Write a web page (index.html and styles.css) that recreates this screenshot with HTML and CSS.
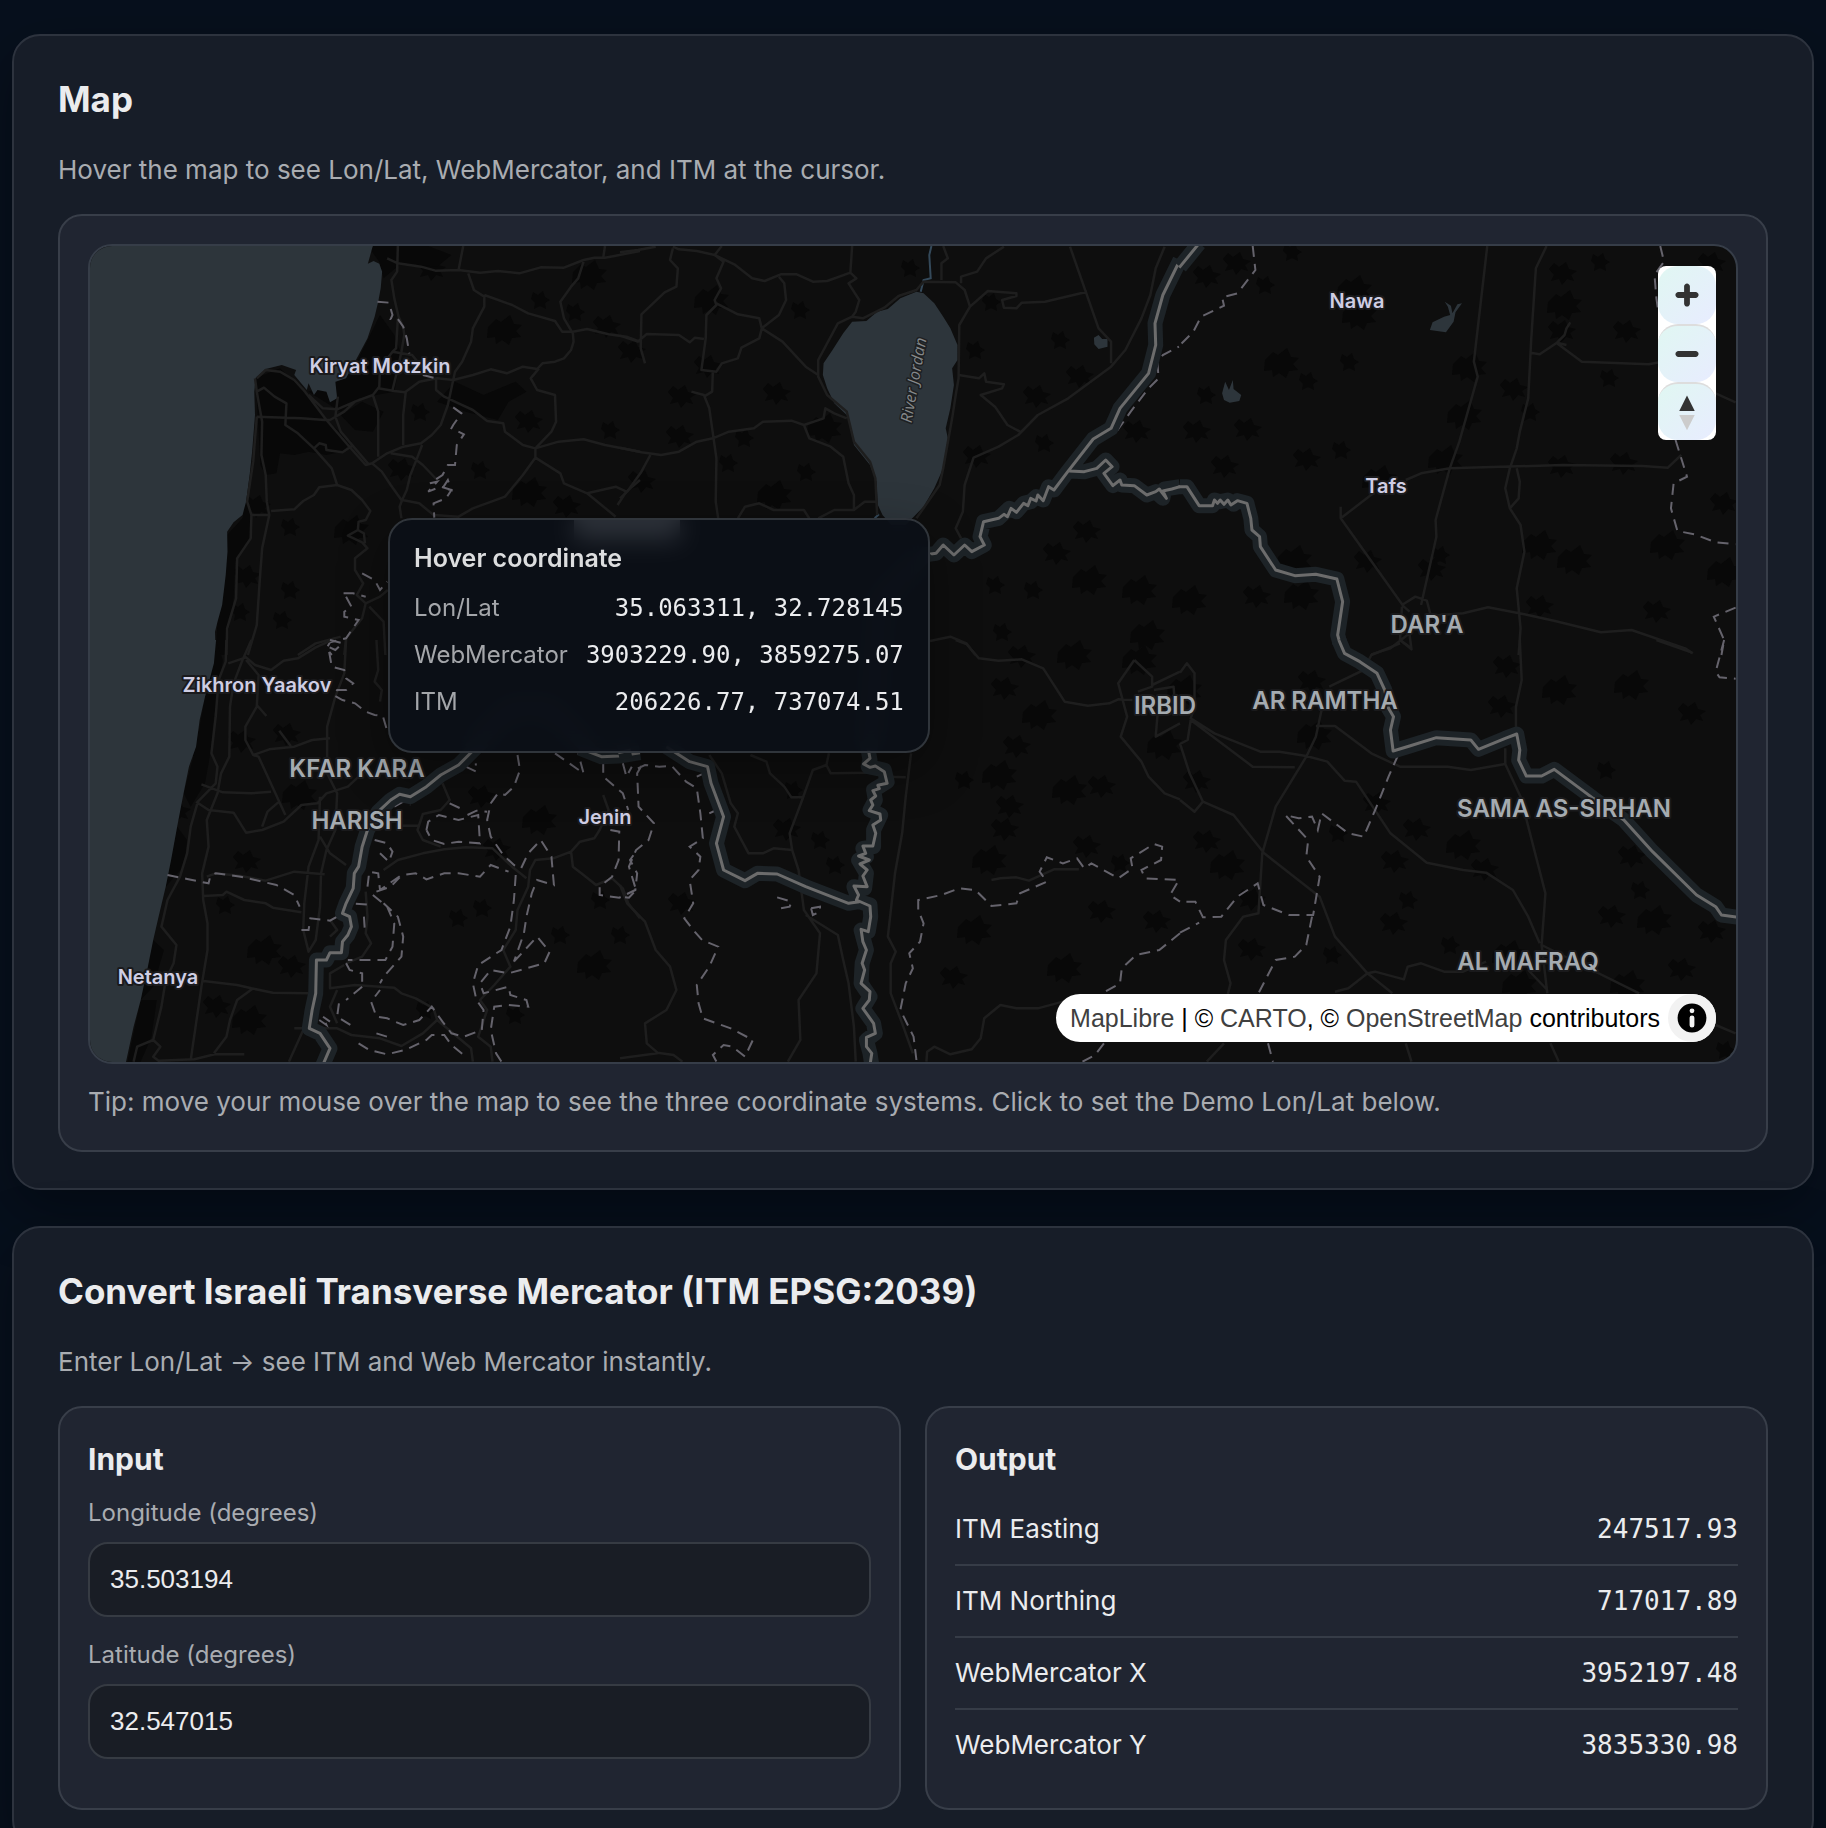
FILE: index.html
```html
<!DOCTYPE html>
<html lang="en">
<head>
<meta charset="utf-8">
<meta name="viewport" content="width=device-width, initial-scale=1">
<title>ITM coordinate converter</title>
<link rel="stylesheet" href="styles.css">
</head>
<body>
<main class="page">
  <section class="card">
    <h2 class="card-title">Map</h2>
    <p class="card-text">Hover the map to see Lon/Lat, WebMercator, and ITM at the cursor.</p>
    <div class="panel">
      <div class="map">
        <svg class="map-canvas" viewBox="90 246 1646 816" preserveAspectRatio="xMidYMid slice" role="img" aria-label="Map of northern Israel and Jordan">
          <defs>
            <path id="scrub-a" d="M-12 -3l5 -6 5 4 7 -5 3 7 8 2 -6 4 3 6 -7 -2 -5 6 -3 -6 -8 2 3 -6z"/>
            <path id="scrub-b" d="M-7 -8l5 3 5 -4 2 6 5 3 -5 3 1 6 -6 -3 -6 3 1 -6 -4 -4z"/>
            <path id="scrub-c" d="M-17 -3l8 -8 5 3 9 -7 4 9 8 1 -6 6 5 6 -9 1 -3 7 -7 -5 -6 4 -1 -7 -8 1z"/>
          </defs>
          <g class="scrub">
            <use href="#scrub-c" x="505" y="330"/><use href="#scrub-a" x="430" y="268"/><use href="#scrub-b" x="540" y="300"/><use href="#scrub-c" x="590" y="275"/>
            <use href="#scrub-b" x="575" y="312"/><use href="#scrub-a" x="605" y="325"/><use href="#scrub-c" x="352" y="530"/><use href="#scrub-a" x="400" y="468"/>
            <use href="#scrub-b" x="420" y="412"/><use href="#scrub-a" x="527" y="420"/><use href="#scrub-b" x="610" y="430"/><use href="#scrub-c" x="530" y="492"/>
            <use href="#scrub-a" x="565" y="505"/><use href="#scrub-b" x="480" y="470"/><use href="#scrub-b" x="290" y="527"/><use href="#scrub-b" x="290" y="590"/>
            <use href="#scrub-b" x="282" y="620"/><use href="#scrub-a" x="255" y="505"/><use href="#scrub-a" x="245" y="575"/><use href="#scrub-b" x="240" y="612"/>
            <use href="#scrub-c" x="195" y="745"/><use href="#scrub-a" x="175" y="810"/><use href="#scrub-a" x="240" y="740"/><use href="#scrub-a" x="285" y="733"/>
            <use href="#scrub-c" x="300" y="795"/><use href="#scrub-a" x="245" y="860"/><use href="#scrub-c" x="265" y="950"/><use href="#scrub-a" x="290" y="965"/>
            <use href="#scrub-a" x="215" y="1005"/><use href="#scrub-c" x="250" y="1020"/><use href="#scrub-b" x="225" y="905"/><use href="#scrub-b" x="425" y="1010"/>
            <use href="#scrub-a" x="480" y="795"/><use href="#scrub-c" x="540" y="820"/><use href="#scrub-b" x="458" y="918"/><use href="#scrub-b" x="482" y="908"/>
            <use href="#scrub-c" x="595" y="965"/><use href="#scrub-b" x="560" y="935"/><use href="#scrub-b" x="620" y="935"/><use href="#scrub-b" x="515" y="1015"/>
            <use href="#scrub-a" x="495" y="848"/><use href="#scrub-b" x="600" y="900"/><use href="#scrub-a" x="630" y="350"/><use href="#scrub-c" x="712" y="300"/>
            <use href="#scrub-a" x="706" y="365"/><use href="#scrub-a" x="680" y="395"/><use href="#scrub-a" x="775" y="392"/><use href="#scrub-b" x="800" y="310"/>
            <use href="#scrub-c" x="825" y="428"/><use href="#scrub-a" x="678" y="435"/><use href="#scrub-b" x="744" y="438"/><use href="#scrub-b" x="728" y="463"/>
            <use href="#scrub-b" x="806" y="472"/><use href="#scrub-c" x="775" y="495"/><use href="#scrub-a" x="640" y="480"/><use href="#scrub-b" x="910" y="268"/>
            <use href="#scrub-b" x="975" y="350"/><use href="#scrub-b" x="991" y="302"/><use href="#scrub-a" x="1035" y="395"/><use href="#scrub-a" x="1078" y="375"/>
            <use href="#scrub-b" x="1060" y="340"/><use href="#scrub-b" x="1044" y="443"/><use href="#scrub-a" x="975" y="455"/><use href="#scrub-a" x="1135" y="430"/>
            <use href="#scrub-a" x="1085" y="530"/><use href="#scrub-c" x="1090" y="580"/><use href="#scrub-a" x="1055" y="552"/><use href="#scrub-c" x="1140" y="590"/>
            <use href="#scrub-b" x="995" y="585"/><use href="#scrub-b" x="1033" y="590"/><use href="#scrub-c" x="1148" y="635"/><use href="#scrub-b" x="1002" y="632"/>
            <use href="#scrub-a" x="1020" y="655"/><use href="#scrub-c" x="1075" y="655"/><use href="#scrub-c" x="1140" y="660"/><use href="#scrub-a" x="1003" y="687"/>
            <use href="#scrub-c" x="1040" y="715"/><use href="#scrub-a" x="1015" y="745"/><use href="#scrub-c" x="1000" y="775"/><use href="#scrub-b" x="964" y="780"/>
            <use href="#scrub-a" x="1008" y="805"/><use href="#scrub-c" x="1070" y="790"/><use href="#scrub-a" x="1100" y="785"/><use href="#scrub-c" x="990" y="860"/>
            <use href="#scrub-a" x="1003" y="828"/><use href="#scrub-a" x="1085" y="845"/><use href="#scrub-b" x="1120" y="863"/><use href="#scrub-c" x="975" y="930"/>
            <use href="#scrub-a" x="1155" y="920"/><use href="#scrub-a" x="1100" y="910"/><use href="#scrub-c" x="1065" y="968"/><use href="#scrub-a" x="952" y="976"/>
            <use href="#scrub-c" x="1165" y="745"/><use href="#scrub-c" x="1185" y="690"/><use href="#scrub-a" x="1195" y="780"/><use href="#scrub-b" x="793" y="790"/>
            <use href="#scrub-a" x="785" y="828"/><use href="#scrub-b" x="820" y="840"/><use href="#scrub-b" x="835" y="865"/><use href="#scrub-a" x="680" y="902"/>
            <use href="#scrub-c" x="1355" y="290"/><use href="#scrub-c" x="1360" y="315"/><use href="#scrub-c" x="1282" y="363"/><use href="#scrub-b" x="1308" y="381"/>
            <use href="#scrub-b" x="1349" y="362"/><use href="#scrub-b" x="1265" y="285"/><use href="#scrub-a" x="1205" y="275"/><use href="#scrub-a" x="1235" y="262"/>
            <use href="#scrub-b" x="1206" y="395"/><use href="#scrub-a" x="1246" y="428"/><use href="#scrub-a" x="1195" y="430"/><use href="#scrub-a" x="1305" y="458"/>
            <use href="#scrub-b" x="1341" y="450"/><use href="#scrub-a" x="1223" y="465"/><use href="#scrub-c" x="1470" y="367"/><use href="#scrub-c" x="1465" y="415"/>
            <use href="#scrub-c" x="1446" y="460"/><use href="#scrub-c" x="1380" y="480"/><use href="#scrub-a" x="1512" y="388"/><use href="#scrub-b" x="1530" y="412"/>
            <use href="#scrub-a" x="1561" y="272"/><use href="#scrub-c" x="1565" y="305"/><use href="#scrub-a" x="1560" y="330"/><use href="#scrub-b" x="1609" y="378"/>
            <use href="#scrub-a" x="1625" y="330"/><use href="#scrub-a" x="1560" y="465"/><use href="#scrub-a" x="1622" y="462"/><use href="#scrub-c" x="1540" y="545"/>
            <use href="#scrub-c" x="1575" y="560"/><use href="#scrub-c" x="1668" y="545"/><use href="#scrub-a" x="1366" y="560"/><use href="#scrub-a" x="1430" y="568"/>
            <use href="#scrub-c" x="1295" y="560"/><use href="#scrub-a" x="1255" y="595"/><use href="#scrub-c" x="1302" y="595"/><use href="#scrub-c" x="1190" y="600"/>
            <use href="#scrub-a" x="1538" y="605"/><use href="#scrub-a" x="1655" y="610"/><use href="#scrub-a" x="1722" y="502"/><use href="#scrub-c" x="1725" y="572"/>
            <use href="#scrub-b" x="1440" y="555"/><use href="#scrub-a" x="1505" y="665"/><use href="#scrub-c" x="1560" y="690"/><use href="#scrub-c" x="1632" y="685"/>
            <use href="#scrub-a" x="1690" y="712"/><use href="#scrub-a" x="1500" y="705"/><use href="#scrub-a" x="1310" y="680"/><use href="#scrub-c" x="1315" y="735"/>
            <use href="#scrub-b" x="1606" y="770"/><use href="#scrub-a" x="1630" y="855"/><use href="#scrub-a" x="1415" y="828"/><use href="#scrub-c" x="1464" y="845"/>
            <use href="#scrub-a" x="1483" y="868"/><use href="#scrub-a" x="1375" y="802"/><use href="#scrub-b" x="1338" y="833"/><use href="#scrub-a" x="1205" y="840"/>
            <use href="#scrub-c" x="1228" y="865"/><use href="#scrub-a" x="1250" y="898"/><use href="#scrub-a" x="1393" y="860"/><use href="#scrub-a" x="1392" y="922"/>
            <use href="#scrub-a" x="1250" y="948"/><use href="#scrub-b" x="1332" y="955"/><use href="#scrub-b" x="1450" y="945"/><use href="#scrub-c" x="1510" y="955"/>
            <use href="#scrub-c" x="1520" y="985"/><use href="#scrub-b" x="1408" y="900"/><use href="#scrub-a" x="1610" y="915"/><use href="#scrub-c" x="1655" y="920"/>
            <use href="#scrub-a" x="1710" y="930"/><use href="#scrub-a" x="1680" y="968"/><use href="#scrub-c" x="1628" y="985"/><use href="#scrub-b" x="1640" y="890"/>
            <use href="#scrub-b" x="1725" y="1050"/><use href="#scrub-b" x="1600" y="262"/><use href="#scrub-a" x="1710" y="262"/><use href="#scrub-b" x="1292" y="252"/>
          </g>
          <g transform="translate(80 235) scale(.357143 .333333)">
            <path class="scrub" d="M492 430L560 400 620 460 690 555 760 620 735 650 690 660 640 650 600 660 560 655 550 715 520 720 505 690ZM780 370L840 240 880 300 900 360 880 470 780 490 730 530 640 470 720 440ZM730 540L790 500 850 530 820 590 770 585ZM806 33H860L975 33 1040 60 1000 95 900 85 850 130 838 80ZM1000 500L1050 440 1130 480 1220 440 1250 470 1200 500 1170 555 1080 530ZM490 560L475 720 455 850 412 900 408 1010 385 1160 380 1260H405L430 1090 435 980 475 910 480 840 465 800Z"/>
            <path class="water" d="M0 0H830L818 40 806 86 822 78 838 86 846 110 842 160 835 200 825 245 805 310 770 380 745 430 715 440 720 490 700 502 690 470 665 465 655 480 640 445 635 465 600 420 605 405 565 390 520 402 492 428 488 470 490 540 482 650 475 720 465 800 455 840 430 862 412 890 413 950 408 1020 398 1110 385 1160 378 1190 380 1260H0Z"/>
            <path class="road" d="M860 70L890 85 955 95 995 107 1060 105 1120 113 1170 108 1230 115 1290 97 1355 98 1410 75 1440 68 1470 68 1500 62 1568 48M890 33L888 110 872 135 880 190 892 245 905 275 908 300 900 350 890 400 875 465M1073 33L1060 105M1470 33L1465 68M1087 115L1103 165 1132 185 1132 215 1100 280 1095 320 1070 380 1050 410 1040 460 1030 510 1010 570 985 600 955 625 905 635 860 655 818 685M1132 180L1210 210 1255 235 1330 258 1350 290 1380 290 1420 282 1480 298 1530 305 1568 320M1410 80L1395 130 1375 155 1345 200 1355 250 1380 295 1382 320 1375 345 1355 370 1330 380 1295 385 1280 402 1240 395 1195 415 1150 403 1100 420 1045 435 1000 430 950 440 910 472 880 468 835 460M1285 400L1262 430 1280 465 1330 480 1333 560 1320 590 1275 640 1240 630 1190 590 1185 565 1140 558 1100 525 1060 505 1020 485 997 465 997 430M890 250L885 340 875 350 840 400 838 455 820 480 770 500 740 530 700 555 685 555 620 550 495 545M875 350L930 360 960 400M495 430L520 405 560 410 600 435 630 470 690 555 750 630 800 690 818 685 845 710 870 750 900 795M640 480L680 520 720 523 770 500M722 485L715 545 730 590 770 640 810 690M495 470L515 458 545 485 578 505 575 570 610 595 655 640 705 700 720 750M490 430L495 470 510 560 508 660 520 720 523 800 530 840 510 940 503 1040 495 1170 470 1260M495 545L485 680 468 800 480 840 478 910 440 970 437 1090 412 1180 410 1260M480 840H530M535 828L600 823 625 798 655 780 670 757 720 750 760 765 790 795 813 828 800 855 780 860 778 885 750 902 790 922 805 940 770 970 770 1005 793 1045 775 1080 800 1105 790 1150 745 1210 740 1260M778 885L795 895 798 925M655 640L670 625 688 630 690 645 735 652 765 630M820 480L835 530 835 665M912 472L905 540V630M870 655L930 665 960 690 1000 735M958 630L940 680 925 720 915 765 902 795 895 815 900 850M902 795L950 805 990 840 1060 845 1100 820 1190 785 1240 720 1275 668V640L1340 620 1410 613 1470 630 1568 650M1275 668L1345 715 1355 745 1420 775 1460 810 1500 845M1420 775L1500 755 1530 770 1505 810M1530 770L1568 735M800 1105L840 1085 862 1065M810 1115L850 1160 855 1260M610 1260L660 1225 730 1205"/>
            <path class="region" d="M833 200L865 203 875 240 870 252 890 252 905 275 915 310 922 355M960 420L990 428M1045 517L1068 535 1045 570 1040 580 1075 598 1055 630 1050 690 1030 690 1015 720 980 745 1000 740 975 770 1010 755 1040 765 1030 735 1015 760 1040 765 1025 790 990 805 992 848M790 1015L825 1035 840 1065 860 1040M738 1075L765 1075 800 1085M745 1085L760 1115 740 1130 740 1145 780 1155 745 1210 700 1222 690 1240 705 1260"/>
          </g>
          <g transform="translate(80 640) scale(.357143 .333333)">
            <path class="scrub" d="M380 0L350 170 325 320 290 460 310 500 350 430 365 340 375 230 400 60ZM272 560L240 740 290 680 300 600ZM205 900L170 1080 205 1040 235 930ZM170 1080L128 1290H160L200 1190 215 1080Z"/>
            <path class="water" d="M0 0H381L375 70 350 170 335 240 325 320 305 380 290 460 272 560 255 660 240 740 220 830 205 900 190 980 170 1080 150 1160 124 1290H0Z"/>
            <path class="road" d="M410 0L408 65 388 120 380 230 368 340 385 380 380 430 330 485 310 560 300 640 280 710 245 780 228 860 270 915 262 970 240 1020 228 1100 205 1200 160 1220 150 1265M480 0L455 60 430 130 420 200 418 350 395 400 385 460 355 540 360 620 342 700 345 780 357 850 357 930 340 1040 325 1150 310 1260M415 70L465 52 490 75 535 90 570 62 610 55 660 22 705 0M465 60L500 105 495 200 463 260V300L485 345 530 328 600 320 650 300 700 295M495 195L522 228M485 345L500 350 575 525M558 272L590 318M340 433L400 457 480 460 535 455M325 485L360 510 430 518 465 578 510 570 570 545 620 495 665 490 690 460 750 440 790 400M555 487L525 515 510 560M745 0L740 100 715 170 692 260V400L720 460 715 570 690 630 675 700 672 800 660 900 640 935 625 870 628 790 640 680 668 600 672 470M345 768L400 765 410 755 460 780 520 790 540 803 620 817M355 710L380 700 450 708 520 722 600 695 685 703M672 590L700 640 745 675M340 1022L440 1035 480 1045 540 1058 640 1060M485 1045L440 1080 420 1140 410 1190 375 1240M205 1200L225 1220 205 1250 220 1262 320 1258 380 1242 460 1243M740 975L700 1000V1045L770 1035 880 1043 900 1060 940 1075 990 1105 1000 1140 1095 1225 1100 1265M1000 1140L960 1180 900 1218 840 1195 760 1185 720 1165 600 1165M720 1050L700 1100 720 1150M625 1170L585 1265M850 690L890 660 960 640 1020 628 1080 622 1155 625 1210 680 1250 715M1010 620L960 600 945 570 960 522 1010 510 1035 480 1015 430M900 557H948M1465 465L1480 510 1455 570 1440 595 1400 605 1375 635 1325 655 1275 660 1260 690 1255 740 1225 810 1220 870 1185 930 1205 980 1160 1035 1120 1080 1140 1110 1115 1190 1150 1220 1155 1265M1375 635L1380 680 1410 705 1445 735 1490 715 1520 745 1535 790 1568 835M800 755L805 830 800 880 815 910 790 950 745 970M830 0L835 90 825 125 845 150 840 185M700 840L720 870 700 890"/>
            <path class="region" d="M700 0L735 10 715 30 695 20 705 80 740 90 745 115 765 130 745 150 720 150 710 165 735 180 770 190 800 215 825 225 848 228 858 265M245 705L300 717 360 730 365 708 380 700 450 710 550 735 600 765 615 800M620 870L640 870 645 835 700 842 720 830 750 790 820 795M1225 345L1232 390 1215 440 1190 465 1170 460 1150 490 1140 540 1150 590 1185 645 1215 675 1235 685 1255 640 1290 600 1320 650 1327 735 1280 720 1265 760 1250 830 1243 880 1215 965M1220 705L1215 780 1205 860 1180 930 1115 975 1100 1030 1110 1080 1130 1110 1125 1170 1075 1190 1040 1180 1015 1145 985 1100 950 1140 905 1155 860 1135 830 1130 815 1085 840 1050M1215 965L1280 890 1315 935 1300 970 1200 1000 1150 990 1120 1030 1130 1060 1200 1040 1205 1065 1250 1080 1255 1100 1200 1095 1160 1100 1150 1170 1165 1240 1180 1265M820 765L860 800 880 850 875 920 855 960 780 960 750 960M850 790L890 830 905 890 900 950 850 1010 840 1030M805 740L810 695 835 700 840 750 900 705 940 700 970 718 1020 700 1060 700 1120 710 1150 675 1200 695M830 755L870 740 895 712M970 570L975 545 1005 525 1060 540 1115 525 1120 610 1060 605 1020 612 985 600 970 570M1035 490L1065 505M1085 525L1110 512 1140 515M780 1210L810 1230 860 1243 910 1230 970 1200 985 1185 1020 1185 1040 1215 1080 1250M725 1090L720 1130 765 1160M670 1140L690 1155 680 1130 700 1145M790 1040L745 1080M745 970L755 990 790 1000 790 1030M795 830L798 880M1330 340L1370 370 1410 400 1395 340M1465 365V410L1520 460 1535 510M1520 370L1530 410 1545 380M1485 570L1510 575 1508 660 1490 710 1455 740V765L1510 773 1555 750 1560 700 1540 660 1560 630M825 600L860 610 875 635 865 665 840 640M830 1180L860 1190 865 1205M1080 380L1110 395 1108 370M880 500L905 485 925 495"/>
            <path class="border-glow" d="M1130 300L1060 375 1010 405 970 440 925 470 895 463 870 480 835 515 805 570 790 620 780 680 768 700 765 745 745 790 735 820 755 830 760 860 750 885 735 905 732 938 700 938 690 960 662 960 660 1060 650 1110 642 1165 672 1180 700 1225 680 1275M1400 325L1460 350 1510 348 1568 338"/>
            <path class="border-line" d="M1130 300L1060 375 1010 405 970 440 925 470 895 463 870 480 835 515 805 570 790 620 780 680 768 700 765 745 745 790 735 820 755 830 760 860 750 885 735 905 732 938 700 938 690 960 662 960 660 1060 650 1110 642 1165 672 1180 700 1225 680 1275M1400 325L1460 350 1510 348 1568 338"/>
          </g>
          <g transform="translate(620 235) scale(.357143 .333333)">
            <path class="water" d="M830 170L850 175 880 205 905 245 925 280 945 330V375L930 400 935 450 925 520 912 580 918 610 905 700 880 760 850 815 800 870 760 870 735 840 722 810 718 740 700 690 655 630 640 545 600 505 580 460 568 420 570 385 595 345 625 295 650 260 690 258 720 230 750 222 785 190ZM1327 308L1340 300 1350 312 1365 312V335L1340 342 1328 328Z"/>
            <path class="stream" d="M872 33L866 60 870 130 850 135 842 170M713 850L725 838"/>
            <path class="road" d="M0 52L50 45 100 35M148 35L165 43 215 48 265 60 320 88 370 130 405 138 450 118 495 118 540 140 580 138 645 113M148 40L140 75 162 100 158 155 125 172 60 238 58 340 70 385M285 33L265 60 290 80 270 130 283 160 265 195 270 210 242 240 240 310 228 405 270 410 285 385 330 370 340 338 390 310 397 280 445 240 465 195 460 145 445 125M0 302L50 320 75 297 165 300 195 322 210 308 235 312M270 205L330 238 390 250 397 280 455 320 520 395 555 420M650 33L645 113 662 130 640 145 670 195 660 230 650 245 680 250 740 218 780 183 830 165 850 140 940 142 965 165 980 215 950 270 948 430 940 480 930 550 920 610 905 700 895 750 830 850M650 245L610 265 555 375V425L580 480 635 530 655 620 700 680 715 730 720 840M905 33L918 70 900 85V135M1075 35L1025 70 1000 110 955 125V145M980 215L1030 168 1110 175 1110 183 1070 195 1075 218 1110 220 1125 203 1190 200 1308 170M1260 35L1340 280 1375 320V385M1525 35L1500 100 1485 180 1460 250 1415 345 1375 395 1255 490 1170 540 1115 600 1060 635 990 668 965 750 960 830 940 880 955 910M948 420L1005 430 1020 415 1025 440 1075 448 1070 460 1010 480 1050 515 1085 570 1120 590M200 470L235 480 250 520 262 610 270 670 268 800 275 850M0 638L60 652 115 660 165 650 215 620 260 610 305 590 375 580 400 560 480 557 515 570 570 550 575 520 600 535 635 550M515 570L530 610 590 635 625 665 640 745 655 780V825L685 800 720 800M655 825L600 825 555 850M260 410L258 470 235 485M85 660L60 710 20 770 0 790M330 850L350 815 390 805 430 825 515 825 530 850M868 1218L925 1205 970 1225 995 1260"/>
            <path class="region" d="M1290 690L1310 640 1340 605 1390 590 1430 530 1480 460 1508 430 1505 385 1520 360 1565 335"/>
            <path class="border-glow" d="M850 960L885 955 905 930 935 960 965 930 985 950 1020 930 1008 905 1018 860 1060 850 1090 820 1110 830 1130 805 1150 800 1165 785 1185 795 1200 755 1215 765 1250 715 1325 612 1375 580 1400 520 1480 415 1500 330 1498 265 1520 180 1568 75M1258 708L1300 710 1335 700 1360 675 1378 695 1355 715 1380 752 1400 735 1405 750 1440 752 1475 780 1500 770 1520 790 1525 762 1568 755"/>
            <path class="border-line" d="M850 960L885 955 905 930 935 960 965 930 985 950 1020 930 1008 905 1018 860 1060 850 1075 838 1085 845 1095 820 1110 832 1130 805 1142 812 1150 790 1165 798 1170 780 1185 797 1200 755 1215 765 1250 715 1325 612 1375 580 1400 520 1480 415 1500 330 1498 265 1520 180 1568 75M1258 708L1300 710 1335 700 1360 675 1378 695 1355 715 1380 752 1400 735 1405 750 1440 752 1475 780 1500 770 1510 762 1530 790 1520 768 1545 762 1568 755"/>
          </g>
          <g transform="translate(620 640) scale(.357143 .333333)">
            <path class="road" d="M940 0L970 12 1005 55 1060 62 1125 58 1185 85 1245 185 1310 197 1370 190 1395 178 1435 180M1440 60L1395 130 1420 230 1402 290 1460 365 1480 410 1525 460 1568 478M1440 60L1490 110V140L1450 155M1568 95L1490 135M1495 150L1550 140 1552 165M1505 225L1500 290 1568 250M815 340L800 470 790 580 770 700 750 890 772 935 758 970V1060L790 1150 820 1240M585 340L578 375 590 400 700 398M750 410L800 412M578 375L540 390 510 480 475 580 482 630 500 690 515 810 560 880 550 1000 500 1080 505 1200 470 1265M365 345L410 365 420 400 460 440 480 472H512M520 825L610 885 625 960 640 1030 655 1160 660 1265M250 345L285 400 310 490 330 520 320 560 360 640 400 640 430 625 482 630M0 735L20 790 70 845 100 930 140 980 158 1050 130 1110 70 1150 75 1210 105 1238 150 1245 175 1265M0 1255L105 1240M1040 720L1065 715 1110 712 1145 722 1215 688 1285 688M858 1265L860 1235 880 1220 925 1243 985 1228 1010 1195 1020 1135 1065 1095 1110 1105 1170 1105 1250 1082"/>
            <path class="region" d="M50 385L70 375 110 380 145 378 185 425 215 445 225 520 232 595 195 620 225 650 220 690 195 720 205 790 180 835 205 870 230 900 275 920 250 980 215 1035 220 1090 232 1135 310 1165 372 1200 350 1250 315 1220 290 1215 260 1245 270 1265M60 378L48 400 52 500 95 550 80 600 45 630 25 680 45 750 25 773 0 770M440 772L480 785 475 800 450 805 445 790M535 805L560 800 560 815 540 825 535 805M830 1260L822 1190 785 1110 800 1030 820 985 810 940 840 905 850 850 835 810 835 780 900 765 950 745 995 750 1040 798 1110 790 1120 760 1195 725 1175 695 1195 652 1240 670 1280 655 1300 685 1320 670 1395 715 1435 685 1430 655 1495 612 1518 620 1515 660 1460 690 1470 715 1565 720 1540 765 1568 785M1568 880L1510 930 1445 945 1405 985 1400 1030 1350 1060M1355 1210L1330 1245 1295 1265M215 410L235 400 240 420M250 520L270 510"/>
            <path class="border-glow" d="M690 300L700 360 695 380 740 390 748 425 710 450 715 480 700 510 730 525 710 570 710 620 680 625 690 650 668 660 690 700 685 745 655 740 670 785 700 795 702 830 695 875 675 870 690 930 678 970 675 1030 700 1070 680 1105 710 1150 715 1180 690 1200 700 1240 705 1275M-5 338L30 330M130 320L195 365 245 380 255 430 290 530 270 610 290 690 350 722 385 700 440 702 520 740 640 790 670 785"/>
            <path class="border-line" d="M690 300L700 355 682 372 700 382 715 378 740 395 748 430 722 436 726 446 708 452 716 468 702 480 708 495 698 512 728 522 730 540 708 555 716 580 708 618 680 618 688 640 668 648 698 660 672 672 692 690 680 708 692 740 655 738 668 765 662 780 700 798 702 830 695 875 675 868 680 905 690 930 678 970 685 990 675 1030 700 1055 698 1080 680 1105 710 1150 715 1180 690 1192 690 1220 705 1240 700 1275M-5 338L30 330M130 320L195 365 245 380 255 430 290 530 270 610 290 690 350 722 385 700 440 702 520 740 640 790 670 785"/>
          </g>
          <g transform="translate(1180 235) scale(.382653 .333333)">
            <path class="water" d="M653 285L660 262 690 245 706 240 700 215 692 200 708 212 712 235 725 208 737 205 720 232 715 260 695 292ZM110 475L118 440 128 465 138 435 140 462 160 480 155 498 130 503 115 495Z"/>
            <path class="road" d="M803 33L768 380 778 425 730 620 705 700 668 855 670 905 630 1110M958 33L930 100 918 310 910 490 888 590 880 640 862 700 850 760 862 820 890 870 900 950 880 1060 890 1180 885 1260M880 700L888 740 885 790 862 820M915 353L940 358 985 323 1010 330M985 323L1005 300 1010 280 1020 262M985 325L1050 380 1225 388 1260 380M1400 475L1452 502M590 735L630 715 705 700 1000 690 1210 693 1275 698 1310 660M420 815V850L505 775M420 850L585 1115 600 1130M580 1110L615 1085 645 1097 655 1140M580 1115L575 1215 605 1243 600 1200M500 1258L550 1240 600 1195M650 1143L740 1135 805 1117 900 1138 980 1158 1100 1192 1180 1185 1320 1240 1340 1255"/>
            <path class="region" d="M190 33L197 105 150 175 110 187 115 212 55 245 35 290 0 330M1255 33L1265 80 1240 120 1245 190 1250 230M1295 615L1325 725 1290 745 1283 820 1300 888 1345 898 1400 922 1452 928M1452 1118L1395 1145 1422 1215 1415 1260"/>
            <path class="border-glow" d="M50 25L0 95M0 755L18 755 50 812 85 812 90 795 105 800 125 795 140 808 150 797 175 805 185 850 188 885 208 905 210 935 250 1005 300 1022 355 1018 410 1032 425 1100 412 1200 418 1225"/>
            <path class="border-line" d="M50 25L-2 98M-4 755L18 755 50 812 85 812 90 795 98 805 105 795 115 808 125 795 133 810 150 797 175 805 185 850 188 885 208 905 210 935 250 1005 300 1022 355 1018 410 1032 425 1100 412 1200 418 1225"/>
          </g>
          <g transform="translate(1180 640) scale(.382653 .333333)">
            <path class="road" d="M888 0L893 120 878 200V280M1245 0L1338 38M0 98L18 70 38 100V200L28 235 90 280 210 335 260 335 330 348 385 365 430 422 460 425 550 580 645 668 740 690 800 698 870 750 910 830 940 910M28 240L190 380 300 382M28 240L20 300 0 312M370 210L355 290 330 350 250 500 215 640 205 820 165 830 120 900 115 960 132 1030 125 1062M575 0L605 25M575 10L500 45 480 90 390 140M355 258L405 258 500 340 575 380 700 380 760 390 850 372V325M850 372L890 470 955 760 945 915 960 1060M0 480L38 515 60 485 140 525 220 640 365 770 405 890 490 1000 555 1060M0 310L25 400 60 485M405 1055L440 1045 490 1000 510 995 585 1018 595 980 630 970 690 995 740 995 800 965M910 990L960 1050M945 915L1200 1060M1400 1155L1452 1180M590 1210L605 1265M968 1210L990 1265M115 1210L70 1265"/>
            <path class="region" d="M570 345L545 410 510 510 480 590 440 580 370 520 360 570 345 530 310 535 275 525 335 600 330 650 365 710 348 825 285 825 218 795 203 730 150 770 108 830 60 832 40 785 0 785M0 878L50 848M345 830L330 915 300 950 250 960 205 1060M230 1210L243 1265M1422 0L1400 95 1410 112 1452 116"/>
            <path class="border-glow" d="M415 0L430 40 470 65 515 100 535 150 545 205 558 230 550 270 557 333 600 318 670 293 760 300 780 328 850 295 880 282 888 330 885 360 905 408 945 408 978 388 1080 475 1160 540 1235 635 1350 765 1400 800 1415 825 1460 832"/>
            <path class="border-line" d="M415 0L430 40 470 65 515 100 535 150 545 205 558 230 550 270 557 333 600 318 670 293 760 300 780 328 850 295 880 282 888 330 885 360 905 408 945 408 978 388 1080 475 1160 540 1235 635 1350 765 1400 800 1415 825 1460 832"/>
          </g>
          <path class="built-up" d="M574 518h106v22h-106z"/>
          <path class="border-glow" d="M470 750L510 708 550 708 590 750M928 552L880 600 870 750"/>
          <g class="town">
            <text x="380" y="373">Kiryat Motzkin</text>
            <text x="257" y="692">Zikhron Yaakov</text>
            <text x="605" y="824">Jenin</text>
            <text x="158" y="984">Netanya</text>
            <text x="1357" y="308">Nawa</text>
            <text x="1386" y="493">Tafs</text>
          </g>
          <g class="city">
            <text x="357" y="777">KFAR KARA</text>
            <text x="357" y="829">HARISH</text>
            <text x="1427" y="633">DAR'A</text>
            <text x="1165" y="714">IRBID</text>
            <text x="1325" y="709">AR RAMTHA</text>
            <text x="1564" y="817">SAMA AS-SIRHAN</text>
            <text x="1528" y="970">AL MAFRAQ</text>
          </g>
          <text class="river" transform="translate(919 381) rotate(-80)">River Jordan</text>
        </svg>

        <div class="tooltip">
          <h3 class="tooltip-title">Hover coordinate</h3>
          <dl class="tooltip-rows">
            <dt>Lon/Lat</dt><dd>35.063311, 32.728145</dd>
            <dt>WebMercator</dt><dd>3903229.90, 3859275.07</dd>
            <dt>ITM</dt><dd>206226.77, 737074.51</dd>
          </dl>
        </div>

        <div class="map-controls">
          <button type="button" aria-label="Zoom in"><svg viewBox="0 0 29 29"><path d="M14.5 8.5c-.75 0-1.5.75-1.5 1.5v3h-3c-.75 0-1.5.75-1.5 1.5S9.25 16 10 16h3v3c0 .75.75 1.5 1.5 1.5S16 19.75 16 19v-3h3c.75 0 1.5-.75 1.5-1.5S19.75 13 19 13h-3v-3c0-.75-.75-1.5-1.5-1.5"/></svg></button>
          <button type="button" aria-label="Zoom out"><svg viewBox="0 0 29 29"><path d="M10 13c-.75 0-1.5.75-1.5 1.5S9.25 16 10 16h9c.75 0 1.5-.75 1.5-1.5S19.75 13 19 13z"/></svg></button>
          <button type="button" aria-label="Reset bearing to north"><svg viewBox="0 0 29 29"><path d="M10.5 14l4-8 4 8z"/><path class="south" d="M10.5 16l4 8 4-8z"/></svg></button>
        </div>

        <div class="attribution">
          <span><a href="#maplibre">MapLibre</a> | © <a href="#carto">CARTO</a>, © <a href="#osm">OpenStreetMap</a> contributors</span>
          <button type="button" aria-label="Toggle attribution"><svg viewBox="0 0 20 20"><path fill-rule="evenodd" d="M4 10a6 6 0 1 0 12 0 6 6 0 1 0-12 0m5-3a1 1 0 1 0 2 0 1 1 0 1 0-2 0m0 3a1 1 0 1 1 2 0v3a1 1 0 1 1-2 0"/></svg></button>
        </div>
      </div>
      <p class="tip">Tip: move your mouse over the map to see the three coordinate systems. Click to set the Demo Lon/Lat below.</p>
    </div>
  </section>

  <section class="card">
    <h2 class="card-title">Convert Israeli Transverse Mercator (ITM EPSG:2039)</h2>
    <p class="card-text">Enter Lon/Lat → see ITM and Web Mercator instantly.</p>
    <div class="columns">
      <form class="panel">
        <h3 class="panel-title">Input</h3>
        <div class="field">
          <label for="lon">Longitude (degrees)</label>
          <input id="lon" type="text" inputmode="decimal" value="35.503194">
        </div>
        <div class="field">
          <label for="lat">Latitude (degrees)</label>
          <input id="lat" type="text" inputmode="decimal" value="32.547015">
        </div>
      </form>
      <div class="panel">
        <h3 class="panel-title">Output</h3>
        <dl class="results">
          <div><dt>ITM Easting</dt><dd>247517.93</dd></div>
          <div><dt>ITM Northing</dt><dd>717017.89</dd></div>
          <div><dt>WebMercator X</dt><dd>3952197.48</dd></div>
          <div><dt>WebMercator Y</dt><dd>3835330.98</dd></div>
        </dl>
      </div>
    </div>
  </section>
</main>
</body>
</html>
```
FILE: styles.css
```css
* { box-sizing: border-box; }

body {
  margin: 0;
  background: #07101d;
  color: #ebecee;
  font-family: Inter, "Noto Sans", sans-serif;
  font-size: 26px;
  line-height: 40px;
}

h2, h3, p, dl, dd { margin: 0; }

.page {
  display: flex;
  flex-direction: column;
  gap: 36px;
  padding: 34px 12px 0;
}

.card {
  padding: 36px 44px;
  border: 2px solid #2d333e;
  border-radius: 28px;
  background: #171d28;
  box-shadow: 0 20px 60px rgba(0, 0, 0, .35);
}

.card-title {
  margin-bottom: 24px;
  font-size: 35px;
  font-weight: 700;
  line-height: 54px;
}

.card-text {
  margin-bottom: 24px;
  color: #a9acb1;
}

.panel {
  padding: 28px;
  border: 2px solid #383e49;
  border-radius: 24px;
  background: #202531;
}

.panel-title {
  margin-bottom: 12px;
  font-size: 30px;
  font-weight: 700;
  line-height: 46px;
}

.columns {
  display: grid;
  grid-template-columns: 1fr 1fr;
  gap: 24px;
}

.tip {
  margin-top: 18px;
  color: #a9acb1;
}

/* Map */
.map {
  position: relative;
  height: 820px;
  overflow: hidden;
  border: 2px solid #363d48;
  border-radius: 24px;
  background: #0e0e0e;
}

.map-canvas {
  display: block;
  width: 100%;
  height: 100%;
}

.map-canvas path { vector-effect: non-scaling-stroke; }
.map-canvas .scrub { fill: #080808; }
.water { fill: #2d353b; }
.stream { fill: none; stroke: #34495a; stroke-width: 2; }
.road { fill: none; stroke: #1e1e1e; stroke-width: 2.5; stroke-linejoin: round; }
.region { fill: none; stroke: #65636c; stroke-width: 2; stroke-dasharray: 11 7; }
.built-up { fill: #d0d4d8; }

.border-glow, .border-line {
  fill: none;
  stroke-linejoin: round;
}

.border-glow { stroke: #1d2327; stroke-width: 15; }
.border-line { stroke: #6c6c6c; stroke-width: 3; }

.map-canvas text {
  font-family: Inter, sans-serif;
  font-weight: 600;
  text-anchor: middle;
  paint-order: stroke;
  stroke: #1a1a1c;
  stroke-width: 4px;
  stroke-linejoin: round;
}

.town { fill: #cfcee4; font-size: 20px; }
.city { fill: #a5abb0; font-size: 24px; }
.map-canvas .river {
  fill: #85888a;
  stroke: #1e2022;
  stroke-width: 3px;
  font-family: "Open Sans", sans-serif;
  font-size: 16px;
  font-style: italic;
  font-weight: 400;
}

.tooltip {
  position: absolute;
  top: 272px;
  left: 298px;
  padding: 20px 24px 29px;
  border: 2px solid #30353b;
  border-radius: 24px;
  background: rgba(11, 15, 24, .84);
  box-shadow: 0 16px 48px rgba(0, 0, 0, .35);
  backdrop-filter: blur(12px);
}

.tooltip-title {
  margin-bottom: 12px;
  color: #dcddde;
  font-size: 25px;
  font-weight: 600;
  line-height: 36px;
}

.tooltip-rows {
  display: grid;
  grid-template-columns: auto auto;
  gap: 7px 18px;
  font-size: 24px;
}

.tooltip-rows dt { color: #a4a6aa; }
.tooltip-rows dd { text-align: right; }

.tooltip-rows dd, .results dd {
  font-family: "DejaVu Sans Mono", monospace;
}

.map-controls {
  position: absolute;
  top: 20px;
  right: 20px;
  overflow: hidden;
  border-radius: 8px;
  background: #fff;
}

.map-controls button {
  display: block;
  width: 58px;
  height: 58px;
  padding: 0;
  border: 0;
  border-radius: 20px;
  background: linear-gradient(135deg, #e0f7f2, #e8ecff);
}

.map-controls button + button { border-top: 2px solid #ddd; }
.map-controls svg { display: block; width: 58px; height: 56px; fill: #333; }
.map-controls .south { fill: #ccc; }

.attribution {
  position: absolute;
  right: 20px;
  bottom: 20px;
  display: flex;
  align-items: center;
  gap: 8px;
  padding-left: 14px;
  border-radius: 24px;
  background: #fff;
  color: #000;
  font-family: "Liberation Sans", Arial, sans-serif;
  font-size: 25px;
}

.attribution a { color: #404040; text-decoration: none; }

.attribution button {
  width: 48px;
  height: 48px;
  padding: 0;
  border: 0;
  border-radius: 24px;
  background: #f2f2f2;
}

.attribution svg { display: block; }

/* Converter */
.field + .field { margin-top: 19px; }

.field label {
  display: block;
  margin-bottom: 10px;
  color: #a9acb1;
  font-size: 24px;
  line-height: 38px;
}

.field input {
  display: block;
  width: 100%;
  height: 75px;
  padding: 0 20px;
  border: 2px solid #363b43;
  border-radius: 20px;
  background: #191d25;
  color: #ebecee;
  font-family: "Liberation Sans", Arial, sans-serif;
  font-size: 26px;
}

.results > div {
  display: flex;
  justify-content: space-between;
  padding: 20px 0;
  border-bottom: 2px solid #363c47;
  line-height: 30px;
}

.results > div:last-child { border-bottom: 0; }
```
